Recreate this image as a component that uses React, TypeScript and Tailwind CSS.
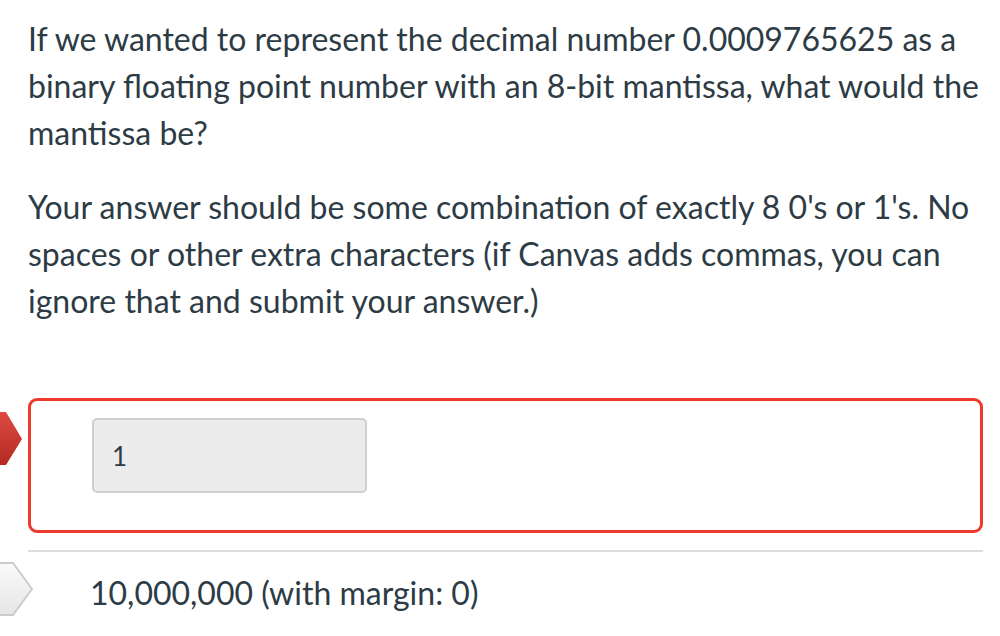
export default function App() {
  return (
    <div
      className="relative min-h-[636px] bg-white text-[#2d3b45] overflow-hidden"
      style={{ fontFamily: "Lato, 'Noto Sans', sans-serif" }}
    >
      <div className="w-[955px] ml-[28px] pt-[15px] text-[32px] leading-[47px]">
        <p>
          If we wanted to represent the decimal number 0.0009765625 as a binary floating point number with an
          8-bit mantissa, what would the mantissa be?
        </p>
        <p className="mt-[27px]">
          Your answer should be some combination of exactly 8 0's or 1's. No spaces or other extra characters (if
          Canvas adds commas, you can ignore that and submit your answer.)
        </p>

        <div className="relative mt-[74px]">
          <div className="h-[135px] rounded-[9px] border-[3px] border-[#ee3a2b] pl-[61px] pt-[17px]">
            <div className="flex h-[75px] w-[275px] items-center rounded-[5px] border-2 border-[#cfcfcf] bg-[#ececec] pl-[18px] text-[26px] leading-none">
              1
            </div>
          </div>
          <svg className="absolute left-[-28px] top-[14px]" width="24" height="54" viewBox="0 0 24 54">
            <defs>
              <linearGradient id="red" x1="0" y1="0" x2="0" y2="1">
                <stop offset="0" stopColor="#dd4a41" />
                <stop offset="1" stopColor="#b42a23" />
              </linearGradient>
            </defs>
            <polygon points="0,0 6,0 22,27 6,53 0,53" fill="url(#red)" />
          </svg>
        </div>

        <div className="mt-[17px] h-[2px] bg-[#dddddd]" />

        <div className="relative flex h-[64px] items-center pl-[62px] pt-[16px]">
          <span>10,000,000 (with margin: 0)</span>
          <svg className="absolute left-[-28px] top-[10px]" width="36" height="56" viewBox="0 0 36 56">
            <defs>
              <linearGradient id="gray" x1="0" y1="0" x2="0" y2="1">
                <stop offset="0" stopColor="#fafafa" />
                <stop offset="1" stopColor="#e6e6e6" />
              </linearGradient>
            </defs>
            <polygon points="-2,1 13,1 32,27 13,53 -2,53" fill="url(#gray)" stroke="#cccccc" strokeWidth="2" />
          </svg>
        </div>
      </div>
    </div>
  )
}
